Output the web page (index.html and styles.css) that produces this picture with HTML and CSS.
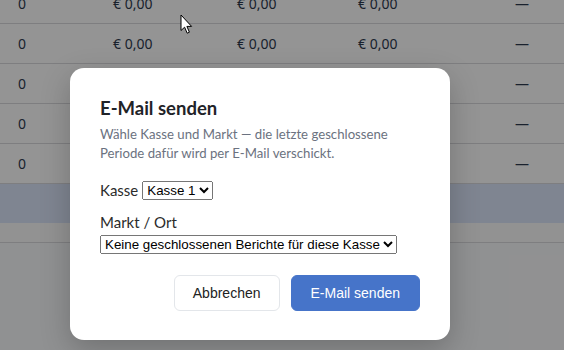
FILE: index.html
```html
<!DOCTYPE html>
<html lang="de">
<head>
<meta charset="utf-8">
<title>E-Mail senden</title>
<link rel="stylesheet" href="styles.css">
</head>
<body>
<div class="table">
  <div class="row"><span>0</span><span>€ 0,00</span><span>€ 0,00</span><span>€ 0,00</span><span>—</span></div>
  <div class="row"><span>0</span><span>€ 0,00</span><span>€ 0,00</span><span>€ 0,00</span><span>—</span></div>
  <div class="row"><span>0</span><span>€ 0,00</span><span>€ 0,00</span><span>€ 0,00</span><span>—</span></div>
  <div class="row"><span>0</span><span>€ 0,00</span><span>€ 0,00</span><span>€ 0,00</span><span>—</span></div>
  <div class="row"><span>0</span><span>€ 0,00</span><span>€ 0,00</span><span>€ 0,00</span><span>—</span></div>
  <div class="row row-selected"></div>
  <div class="row row-footer"></div>
</div>

<div class="overlay">
  <div class="modal">
    <h2 class="modal-title">E-Mail senden</h2>
    <p class="modal-desc">Wähle Kasse und Markt — die letzte geschlossene Periode dafür wird per E-Mail verschickt.</p>
    <div class="field-inline">
      <label class="label" for="kasse">Kasse</label>
      <select id="kasse"><option>Kasse 1</option></select>
    </div>
    <div class="field">
      <label class="label" for="markt">Markt / Ort</label>
      <select id="markt"><option>Keine geschlossenen Berichte für diese Kasse</option></select>
    </div>
    <div class="actions">
      <button class="btn btn-secondary">Abbrechen</button>
      <button class="btn btn-primary">E-Mail senden</button>
    </div>
  </div>
</div>

<svg class="cursor" width="13" height="21" viewBox="0 0 13 21" aria-hidden="true">
  <path d="M1 1 L1 16.5 L4.6 13.2 L7.2 19.2 L9.4 18.2 L6.9 12.4 L11.6 12.4 Z" fill="#fff" stroke="#000" stroke-width="1" stroke-linejoin="round"/>
</svg>
</body>
</html>
```

FILE: styles.css
```css
html, body {
  margin: 0;
  padding: 0;
}
body {
  width: 564px;
  height: 350px;
  overflow: hidden;
  background: #f9fafb;
  font-family: "Noto Sans", "Open Sans", sans-serif;
  position: relative;
}

.table {
  margin-top: -16px;
}
.row {
  display: grid;
  grid-template-columns: 95px 124px 121px 157px 1fr;
  align-items: center;
  height: 40px;
  padding-left: 18px;
  background: #fff;
  border-bottom: 1px solid #d9dadd;
  box-sizing: border-box;
  font-size: 14px;
  color: #2d3a4f;
}
.row-selected {
  background: #dbe6fa;
  border-bottom: none;
  height: 39px;
}
.row-footer {
  height: 20px;
  background: #fbfbfc;
  border-bottom: 1px solid #d9dadd;
}

.overlay {
  position: absolute;
  inset: 0;
  background: rgba(0, 0, 0, 0.42);
  display: flex;
  align-items: flex-start;
  padding: 68px 0 0 70px;
}
.modal {
  width: 380px;
  box-sizing: border-box;
  background: #fff;
  border-radius: 14px;
  padding: 27px 30px 29px;
  box-shadow: 0 10px 30px rgba(0, 0, 0, 0.22);
  font-family: Lato, "Noto Sans", sans-serif;
}
.modal-title {
  margin: 0;
  font-size: 18.5px;
  font-weight: 700;
  line-height: 26px;
  color: #1f2328;
}
.modal-desc {
  margin: 4px 0 0;
  font-size: 13.2px;
  line-height: 18.5px;
  color: #6b7280;
}
.field-inline {
  margin-top: 18px;
  display: flex;
  align-items: center;
  gap: 4px;
}
.field {
  margin-top: 12px;
  display: flex;
  flex-direction: column;
  align-items: flex-start;
  gap: 3px;
}
.label {
  font-size: 15px;
  line-height: 20px;
  color: #2b2b2b;
}
select {
  font-family: "Liberation Sans", Arial, sans-serif;
  font-size: 13.33px;
}
.actions {
  margin-top: 21px;
  display: flex;
  justify-content: flex-end;
  gap: 11px;
}
.btn {
  height: 36px;
  padding: 0 18px;
  border-radius: 6px;
  font-family: "Liberation Sans", Arial, sans-serif;
  font-size: 14px;
  cursor: pointer;
}
.btn-secondary {
  background: #fff;
  border: 1px solid #e3e6ea;
  color: #222;
}
.btn-primary {
  background: #4674c9;
  border: 1px solid #4674c9;
  color: #fff;
  padding: 0 19px;
}

.cursor {
  position: absolute;
  left: 180px;
  top: 14px;
}
```
